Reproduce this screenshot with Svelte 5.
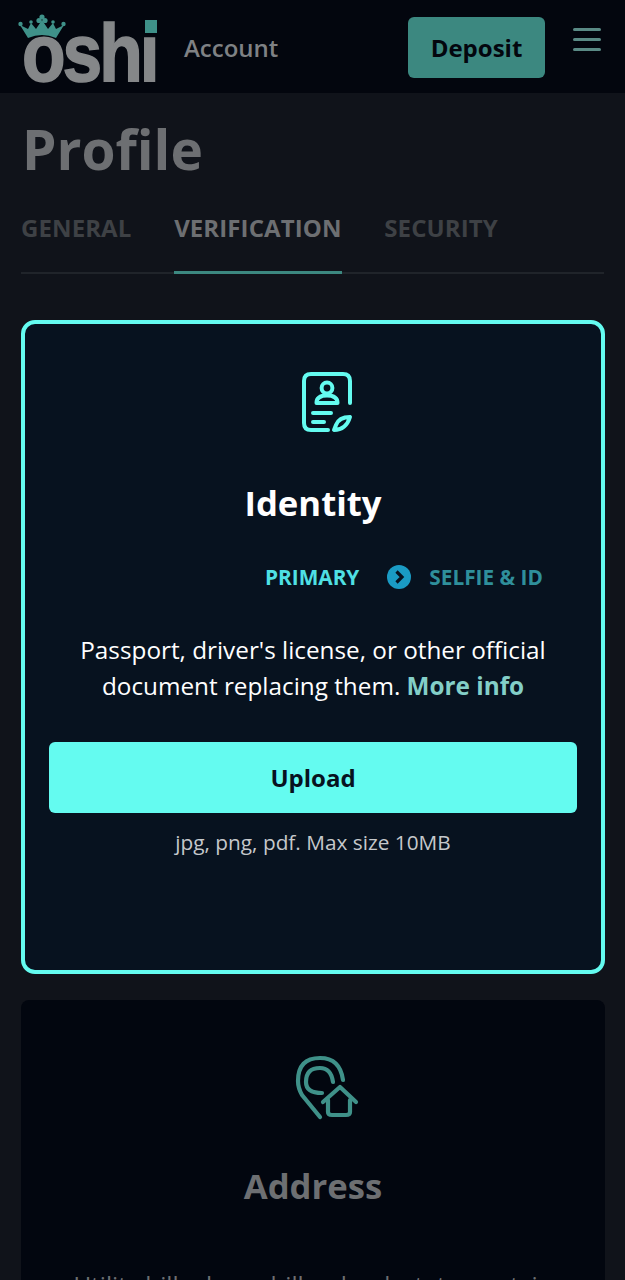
<script>
  const tabs = [
    { label: 'General', active: false },
    { label: 'Verification', active: true },
    { label: 'Security', active: false }
  ];
</script>

<div class="page">
  <header class="topbar">
    <div class="brand">
      <div class="logo">
        <span class="wordmark">oshi</span>
        <span class="dot"></span>
        <svg class="crown" viewBox="0 0 50 26" width="50" height="26" aria-hidden="true">
          <g fill="#3f9189">
            <path d="M10 24 L2 11 L10 15 L13 9 L18 15 L24 6 L30 15 L35 9 L38 15 L46 11 L38 24 Q24 18 10 24 Z" />
            <circle cx="24" cy="3" r="2.6" />
            <circle cx="21" cy="6.5" r="2.6" />
            <circle cx="27" cy="6.5" r="2.6" />
            <circle cx="13" cy="8" r="1.8" />
            <circle cx="35" cy="8" r="1.8" />
            <circle cx="2.5" cy="10" r="2.2" />
            <circle cx="45.5" cy="10" r="2.2" />
          </g>
        </svg>
      </div>
      <span class="section">Account</span>
    </div>
    <div class="actions">
      <button class="deposit">Deposit</button>
      <div class="burger"><span></span><span></span><span></span></div>
    </div>
  </header>

  <main class="content">
    <h1>Profile</h1>

    <nav class="tabs">
      {#each tabs as tab}
        <div class="tab" class:active={tab.active}>{tab.label}</div>
      {/each}
    </nav>

    <section class="card current">
      <svg class="doc-icon" viewBox="0 0 54 64" width="54" height="64" fill="none" stroke="#64fbf0" stroke-width="4" stroke-linecap="round" stroke-linejoin="round" aria-hidden="true">
        <path d="M50 33 V11 Q50 4 43 4 H11 Q4 4 4 11 V53 Q4 60 11 60 H28" />
        <circle cx="27" cy="18" r="5.4" />
        <path d="M16.5 33 Q16.5 25.5 27 25.5 Q37.5 25.5 37.5 33 Z" />
        <path d="M13 43 H31 M13 52 H24" />
        <path d="M50 47 Q39 47 36 55 L34 60 Q46 60 50 47 Z" />
      </svg>
      <h2>Identity</h2>
      <div class="steps">
        <span class="step-on">Primary</span>
        <span class="chevron">
          <svg viewBox="0 0 24 24" width="24" height="24" aria-hidden="true">
            <circle cx="12" cy="12" r="12" fill="#1a9bc4" />
            <path d="M9.5 6.5 L15 12 L9.5 17.5" fill="none" stroke="#07121f" stroke-width="3.2" />
          </svg>
        </span>
        <span class="step-off">Selfie &amp; ID</span>
      </div>
      <p class="desc">Passport, driver's license, or other official document replacing them. <span class="more">More info</span></p>
      <button class="upload">Upload</button>
      <p class="hint">jpg, png, pdf. Max size 10MB</p>
    </section>

    <section class="card next">
      <svg class="pin-icon" viewBox="0 0 66 66" width="66" height="66" fill="none" stroke="#3f9189" stroke-width="4.2" stroke-linecap="round" stroke-linejoin="round" aria-hidden="true">
        <path d="M26 62 L8 40 Q4 33 4 26 Q4 3 26 3 Q46 3 49 25" />
        <path d="M39 27 Q37 13 26 13 Q12 13 12 27 Q12 38 28 38" />
        <path d="M29 47 L46 32 L62 47" />
        <path d="M34 45 V57 Q34 60 38 60 H52 Q56 60 56 57 V45" />
      </svg>
      <h2 class="muted">Address</h2>
      <p class="desc dim">Utility bill, phone bill or bank statement, in your name</p>
    </section>
  </main>
</div>

<style>
  :global(body) {
    margin: 0;
    background: #10131a;
  }

  .page {
    height: 1280px;
    overflow: hidden;
    font-family: "Open Sans", "Liberation Sans", sans-serif;
    background: #10131a;
  }

  .topbar {
    height: 93px;
    box-sizing: border-box;
    padding: 0 24px;
    display: flex;
    align-items: center;
    justify-content: space-between;
    background: #03060e;
  }

  .brand {
    display: flex;
    align-items: center;
    gap: 27px;
  }

  .logo {
    position: relative;
    width: 133px;
    height: 62px;
    margin-top: 14px;
  }

  .wordmark {
    display: block;
    font-family: "Liberation Sans", Arial, sans-serif;
    font-weight: 700;
    font-size: 82px;
    line-height: 62px;
    letter-spacing: -3.5px;
    color: #858789;
    -webkit-text-stroke: 1.6px #858789;
    transform: translate(-2px, -1.5px) scaleX(0.87);
    transform-origin: left center;
  }

  .dot {
    position: absolute;
    top: -3px;
    right: 0;
    width: 12px;
    height: 13px;
    background: #3f9189;
    outline: 2px solid #03060e;
  }

  .crown {
    position: absolute;
    left: -6px;
    top: -9px;
  }

  .section {
    font-size: 24px;
    color: #7f8184;
    font-weight: 600;
    margin-top: 2px;
  }

  .actions {
    display: flex;
    align-items: center;
    gap: 28px;
  }

  .deposit {
    width: 137px;
    height: 61px;
    margin-top: 2px;
    border: none;
    border-radius: 6px;
    background: #3c8880;
    color: #03060e;
    font-family: inherit;
    font-size: 24px;
    font-weight: 700;
  }

  .burger {
    width: 28px;
    display: flex;
    flex-direction: column;
    gap: 7px;
    margin-top: -14px;
  }

  .burger span {
    height: 3px;
    border-radius: 2px;
    background: #5a8a85;
  }

  .content {
    padding: 0 21px;
  }

  h1 {
    margin: 20px 0 0 1px;
    font-size: 55px;
    line-height: 72px;
    font-weight: 700;
    color: #6d6f72;
  }

  .tabs {
    display: flex;
    gap: 42.7px;
    margin-top: 13px;
    border-bottom: 2px solid #20242a;
  }

  .tab {
    text-transform: uppercase;
    font-size: 24px;
    letter-spacing: 0.1px;
    font-weight: 700;
    line-height: 34px;
    padding: 13px 0 26px;
    margin-bottom: -2px;
    color: #3e4145;
  }

  .tab.active {
    color: #6d6f72;
    border-bottom: 3px solid #3c8880;
  }

  .card {
    width: 584px;
    box-sizing: border-box;
    display: flex;
    flex-direction: column;
    align-items: center;
    text-align: center;
    border-radius: 8px;
  }

  .current {
    height: 654px;
    margin-top: 46px;
    padding: 46px 24px 0;
    border: 4px solid #64fbf0;
    border-radius: 14px;
    background: #07121f;
  }

  .next {
    margin-top: 26px;
    height: 400px;
    padding: 55px 24px 0;
    background: #02060f;
  }

  .doc-icon {
    margin-left: 28px;
  }

  .pin-icon {
    margin-left: 27px;
  }

  h2 {
    margin: 44px 0 0;
    font-size: 34.7px;
    line-height: 50px;
    font-weight: 700;
    color: #fff;
  }

  h2.muted {
    color: #6d6f72;
    margin-top: 40px;
  }

  .steps {
    display: flex;
    align-items: center;
    align-self: flex-start;
    margin: 34px 0 0 216px;
    font-size: 20.8px;
    font-weight: 700;
    text-transform: uppercase;
    line-height: 30px;
  }

  .step-on {
    color: #4fe0e4;
  }

  .chevron {
    display: flex;
    margin: 0 18px 0 28px;
  }

  .step-off {
    color: #2f8f9b;
  }

  .desc {
    margin: 40px 0 0;
    font-size: 24.3px;
    line-height: 36px;
    color: #fff;
  }

  .desc.dim {
    color: #6d6f72;
    margin-top: 56px;
  }

  .more {
    font-weight: 700;
    color: #83cfc8;
  }

  .upload {
    width: 528px;
    height: 71px;
    margin-top: 38px;
    flex-shrink: 0;
    border: none;
    border-radius: 6px;
    background: #64fbf0;
    color: #07121f;
    font-family: inherit;
    font-size: 24px;
    font-weight: 700;
  }

  .hint {
    margin: 14px 0 0;
    font-size: 20.8px;
    line-height: 30px;
    color: #c5c8cb;
  }
</style>
